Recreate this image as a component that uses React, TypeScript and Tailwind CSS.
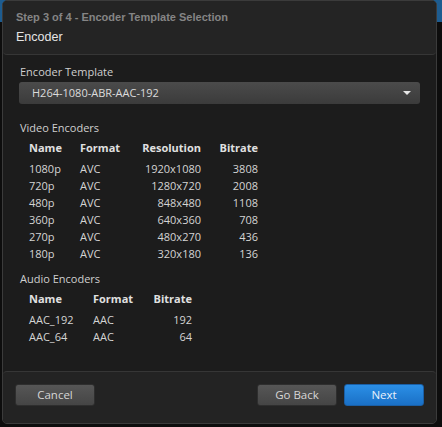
import React from "react";

type VideoRow = { name: string; format: string; resolution: string; bitrate: string };
type AudioRow = { name: string; format: string; bitrate: string };

const VIDEO: VideoRow[] = [
  { name: "1080p", format: "AVC", resolution: "1920x1080", bitrate: "3808" },
  { name: "720p", format: "AVC", resolution: "1280x720", bitrate: "2008" },
  { name: "480p", format: "AVC", resolution: "848x480", bitrate: "1108" },
  { name: "360p", format: "AVC", resolution: "640x360", bitrate: "708" },
  { name: "270p", format: "AVC", resolution: "480x270", bitrate: "436" },
  { name: "180p", format: "AVC", resolution: "320x180", bitrate: "136" },
];

const AUDIO: AudioRow[] = [
  { name: "AAC_192", format: "AAC", bitrate: "192" },
  { name: "AAC_64", format: "AAC", bitrate: "64" },
];

function SectionLabel({ children, className = "" }: { children: React.ReactNode; className?: string }) {
  return <div className={"pl-[1px] text-[11px] leading-[16px] text-[#cfcfcf] " + className}>{children}</div>;
}

function Button({ children, primary = false }: { children: React.ReactNode; primary?: boolean }) {
  return (
    <button
      className={
        primary
          ? "h-[22px] w-[80px] rounded-[3px] border border-[#1a5fa6] bg-[linear-gradient(to_bottom,#2b8fe6,#1a70c6)] text-[11.5px] text-[#e8f1fb]"
          : "h-[22px] w-[80px] rounded-[3px] border border-[#2e2e2e] bg-[linear-gradient(to_bottom,#565656,#454545)] text-[11.5px] text-[#d6d6d6]"
      }
    >
      {children}
    </button>
  );
}

export default function App() {
  return (
    <div
      className="h-[427px] w-[442px] overflow-hidden bg-[linear-gradient(to_bottom,#1d5c90_22px,#0d0d0d_22px)] pl-[2px]"
      style={{ fontFamily: "'Open Sans', sans-serif" }}
    >
      <div className="flex h-[424px] w-[435px] flex-col overflow-hidden rounded-[5px] border border-[#3b3b3b] bg-[#1c1c1c]">
        {/* title bar */}
        <div className="h-[54px] shrink-0 rounded-b-[4px] border-b border-[#363636] bg-[#242424] px-[13px] pt-[9px]">
          <div
            className="text-[11px] font-bold leading-[15px] text-[#858585]"
            style={{ fontFamily: "'Liberation Sans', Arial, sans-serif" }}
          >
            Step 3 of 4 - Encoder Template Selection
          </div>
          <div
            className="mt-[4px] text-[12.5px] leading-[16px] text-[#e6e6e6]"
            style={{ fontFamily: "'Liberation Sans', Arial, sans-serif" }}
          >
            Encoder
          </div>
        </div>

        {/* body */}
        <div className="flex-1 px-[16px] pt-[9px]">
          <SectionLabel>Encoder Template</SectionLabel>
          <div className="mt-[2px] flex h-[22px] items-center justify-between rounded-[3px] bg-[linear-gradient(to_bottom,#4b4b4b,#3b3b3b)] pl-[13px] pr-[9px] text-[11px] text-[#dcdcdc]">
            <span>H264-1080-ABR-AAC-192</span>
            <svg width="8" height="4" viewBox="0 0 8 4">
              <path d="M0 0h8L4 4z" fill="#e6e6e6" />
            </svg>
          </div>

          <SectionLabel className="mt-[16px]">Video Encoders</SectionLabel>
          <div className="ml-[10px] mt-[4px] text-[11px] text-[#d4d4d4]">
            <div className="grid h-[17px] grid-cols-[51px_50px_71px_57px] items-center font-bold text-[#e0e0e0]">
              <span>Name</span>
              <span>Format</span>
              <span className="text-right">Resolution</span>
              <span className="text-right">Bitrate</span>
            </div>
            <div className="mt-[4px]">
              {VIDEO.map((r) => (
                <div key={r.name} className="grid h-[17px] grid-cols-[51px_50px_71px_57px] items-center">
                  <span>{r.name}</span>
                  <span>{r.format}</span>
                  <span className="text-right">{r.resolution}</span>
                  <span className="text-right">{r.bitrate}</span>
                </div>
              ))}
            </div>
          </div>

          <SectionLabel className="mt-[8px]">Audio Encoders</SectionLabel>
          <div className="ml-[10px] mt-[4px] text-[11px] text-[#d4d4d4]">
            <div className="grid h-[17px] grid-cols-[64px_47px_52px] items-center font-bold text-[#e0e0e0]">
              <span>Name</span>
              <span>Format</span>
              <span className="text-right">Bitrate</span>
            </div>
            <div className="mt-[4px]">
              {AUDIO.map((r) => (
                <div key={r.name} className="grid h-[17px] grid-cols-[64px_47px_52px] items-center">
                  <span>{r.name}</span>
                  <span>{r.format}</span>
                  <span className="text-right">{r.bitrate}</span>
                </div>
              ))}
            </div>
          </div>
        </div>

        {/* footer */}
        <div className="flex h-[52px] shrink-0 items-start rounded-t-[4px] border-t border-[#363636] bg-[#232323] px-[12px] pt-[12px]">
          <Button>Cancel</Button>
          <div className="flex-1" />
          <div className="flex gap-[7px]">
            <Button>Go Back</Button>
            <Button primary>Next</Button>
          </div>
        </div>
      </div>
    </div>
  );
}
